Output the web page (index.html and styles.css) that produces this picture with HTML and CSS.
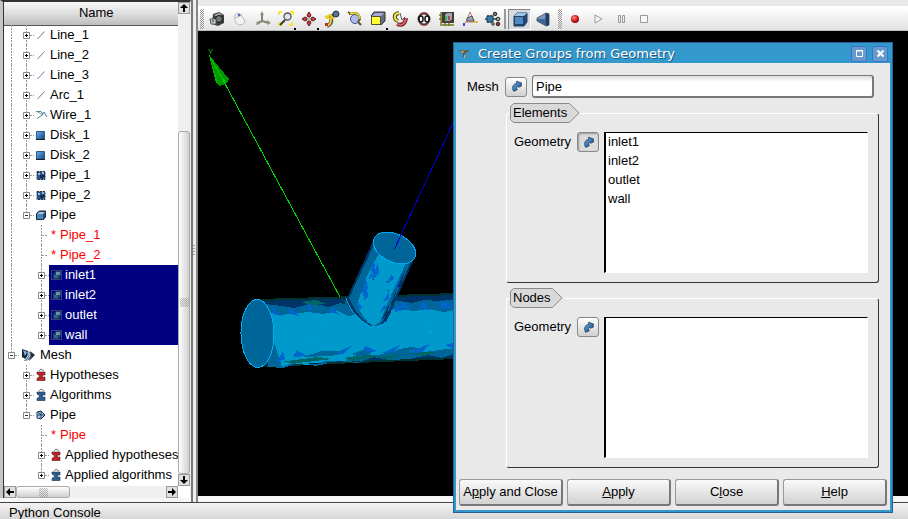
FILE: index.html
```html
<!DOCTYPE html>
<html lang="en">
<head>
<meta charset="utf-8">
<title>Create Groups from Geometry</title>
<link rel="stylesheet" href="styles.css">
</head>
<body>
<svg class="defs" aria-hidden="true">
  <defs>
    <linearGradient id="blue" x1="0" y1="0" x2="1" y2="1"><stop offset="0" stop-color="#69b4f0"/><stop offset="1" stop-color="#0d3f7c"/></linearGradient>
    <linearGradient id="grey" x1="0" y1="0" x2="1" y2="1"><stop offset="0" stop-color="#f4f4f4"/><stop offset="1" stop-color="#8c8c8c"/></linearGradient>
    <radialGradient id="red" cx=".4" cy=".35" r=".7"><stop offset="0" stop-color="#ff9a9a"/><stop offset=".5" stop-color="#dc2222"/><stop offset="1" stop-color="#7a0a0a"/></radialGradient>
  </defs>
  <symbol id="g-line" viewBox="0 0 15 20"><path d="M7.500 0V20" class="dots"/></symbol>
  <symbol id="g-tee" viewBox="0 0 15 20"><path d="M7.500 0V20M8 10.500H14" class="dots"/></symbol>
  <symbol id="g-plus" viewBox="0 0 15 20"><path d="M7.500 0V20M11 10.500H15" class="dots"/><path d="M4.500 7.500h6v6h-6z" class="box"/><path d="M6 10.500h3M7.500 9v3" stroke="#000"/></symbol>
  <symbol id="g-plus-end" viewBox="0 0 15 20"><path d="M7.500 0V8M11 10.500H15" class="dots"/><path d="M4.500 7.500h6v6h-6z" class="box"/><path d="M6 10.500h3M7.500 9v3" stroke="#000"/></symbol>
  <symbol id="g-minus-end" viewBox="0 0 15 20"><path d="M7.500 0V8M11 10.500H15" class="dots"/><path d="M4.500 7.500h6v6h-6z" class="box"/><path d="M6 10.500h3" stroke="#333"/></symbol>
  <symbol id="i-line" viewBox="0 0 16 16"><path d="M3.500 12L10.500 4.500" stroke="#777" fill="none"/></symbol>
  <symbol id="i-line-b" viewBox="0 0 16 16"><path d="M3.500 12L10.500 4.500" stroke="#7275a5" fill="none"/></symbol>
  <symbol id="i-wire" viewBox="0 0 16 16"><path d="M2 4.500h5l2 3-6 4M8 8l2-3 3 5" stroke="#4a8197" fill="none"/><path d="M3 4.500l5 3" stroke="#7aa" /></symbol>
  <symbol id="i-disk" viewBox="0 0 16 16"><path d="M2.500 4.500h8v8h-8z" fill="url(#blue)" stroke="#34597f"/><path d="M2 12.500h9" stroke="#222"/></symbol>
  <symbol id="i-part" viewBox="0 0 16 16"><path d="M3 4.500h8v8H3z" fill="#285688"/><path d="M3 4.500h8v8H3z" fill="none" stroke="#26323d" stroke-dasharray="2 1"/><path d="M4 6h2v2H4zM8 5h2v2H8z" fill="#91bada"/><path d="M6 8h3v3H6zM9 8h2v2H9z" fill="#132c4a"/></symbol>
  <symbol id="i-cube" viewBox="0 0 16 16"><path d="M2.500 6.500l3-2.500h6v6l-2 2.500h-7z" fill="#244a78" stroke="#17283c"/><path d="M3 7h6v5H3z" fill="#4b86bb"/><path d="M3 7l2.500-2H11L9 7z" fill="#9fc6df"/></symbol>
  <symbol id="i-ghost" viewBox="0 0 16 16"><path d="M2.500 3.500h10v9h-10z" fill="none" stroke="#6c7f7c" stroke-dasharray="1 1"/><path d="M4 7l3-3h5v5l-2 3H4z" fill="#1c3d63"/><path d="M7 5h4v3H7z" fill="#6594b1"/><path d="M5 8h4v3H5z" fill="#2f638f"/></symbol>
  <symbol id="i-meshroot" viewBox="0 0 21 16"><path d="M3 2l6 2 2 4-3 5-5-3z" fill="#182638"/><path d="M4 3l4 2-2 4z" fill="#8db4d6"/><path d="M8 4l7 3-5 6-5 1 3-5z" fill="#456b91"/><path d="M9 5l2 4-3 4M11 6l-5 7" stroke="#c9dceb" fill="none"/><path d="M11 4l5 4-6 6 2-5z" fill="#33332f"/></symbol>
  <symbol id="i-hyp" viewBox="0 0 16 16"><path d="M3 5h8v3H9L7 7l2 2-2 2 3-1h1v3.500H3v-2L6 9 3 7z" fill="#c62027" stroke="#50191b" stroke-width=".6"/><path d="M5 4l2-2 3 2" stroke="#777" fill="none"/></symbol>
  <symbol id="i-alg" viewBox="0 0 16 16"><path d="M3 5h8v3H9L7 7l2 2-2 2 3-1h1v3.500H3v-2L6 9 3 7z" fill="#2d6195" stroke="#1a293b" stroke-width=".6"/><path d="M5 4l2-2 3 2" stroke="#777" fill="none"/></symbol>
  <symbol id="i-mesh" viewBox="0 0 16 16"><path d="M3 5l4-1 4 4-4 4-4-1z" fill="#a8c4df" stroke="#1d3856"/><path d="M4 5l3 3h4M7 8v4M7 4v4M3 8h4" stroke="#244668" fill="none"/></symbol>
  <symbol id="i-arrow" viewBox="0 0 16 16"><path d="M4.500 14C1.500 9 4 4.500 8.500 4L8 1.500 14 3.500v4L10.500 9 10 7.500C8 8 7.500 10 9 12z" fill="url(#blue)" stroke="#18283e" stroke-width=".8"/></symbol>
</svg>

<main class="desk">
  <section class="browser" aria-label="Object browser">
    <div class="tree-col">
      <div class="tree-head">Name</div>
      <ul class="tree">
        <li><svg class="g"><use href="#g-line"/></svg><button class="g" aria-label="Expand"><svg class="g"><use href="#g-plus"/></svg></button><span class="item"><svg class="ic"><use href="#i-line"/></svg>Line_1</span></li>
        <li><svg class="g"><use href="#g-line"/></svg><button class="g" aria-label="Expand"><svg class="g"><use href="#g-plus"/></svg></button><span class="item"><svg class="ic"><use href="#i-line-b"/></svg>Line_2</span></li>
        <li><svg class="g"><use href="#g-line"/></svg><button class="g" aria-label="Expand"><svg class="g"><use href="#g-plus"/></svg></button><span class="item"><svg class="ic"><use href="#i-line-b"/></svg>Line_3</span></li>
        <li><svg class="g"><use href="#g-line"/></svg><button class="g" aria-label="Expand"><svg class="g"><use href="#g-plus"/></svg></button><span class="item"><svg class="ic"><use href="#i-line"/></svg>Arc_1</span></li>
        <li><svg class="g"><use href="#g-line"/></svg><button class="g" aria-label="Expand"><svg class="g"><use href="#g-plus"/></svg></button><span class="item"><svg class="ic"><use href="#i-wire"/></svg>Wire_1</span></li>
        <li><svg class="g"><use href="#g-line"/></svg><button class="g" aria-label="Expand"><svg class="g"><use href="#g-plus"/></svg></button><span class="item"><svg class="ic"><use href="#i-disk"/></svg>Disk_1</span></li>
        <li><svg class="g"><use href="#g-line"/></svg><button class="g" aria-label="Expand"><svg class="g"><use href="#g-plus"/></svg></button><span class="item"><svg class="ic"><use href="#i-disk"/></svg>Disk_2</span></li>
        <li><svg class="g"><use href="#g-line"/></svg><button class="g" aria-label="Expand"><svg class="g"><use href="#g-plus"/></svg></button><span class="item"><svg class="ic"><use href="#i-part"/></svg>Pipe_1</span></li>
        <li><svg class="g"><use href="#g-line"/></svg><button class="g" aria-label="Expand"><svg class="g"><use href="#g-plus"/></svg></button><span class="item"><svg class="ic"><use href="#i-part"/></svg>Pipe_2</span></li>
        <li><svg class="g"><use href="#g-line"/></svg><button class="g" aria-label="Collapse"><svg class="g"><use href="#g-minus-end"/></svg></button><span class="item"><svg class="ic"><use href="#i-cube"/></svg>Pipe</span></li>
        <li><svg class="g"><use href="#g-line"/></svg><span class="g"></span><svg class="g"><use href="#g-tee"/></svg><span class="item ref"><span class="star">*</span>Pipe_1</span></li>
        <li><svg class="g"><use href="#g-line"/></svg><span class="g"></span><svg class="g"><use href="#g-tee"/></svg><span class="item ref"><span class="star">*</span>Pipe_2</span></li>
        <li><svg class="g"><use href="#g-line"/></svg><span class="g"></span><button class="g" aria-label="Expand"><svg class="g"><use href="#g-plus"/></svg></button><span class="item sel"><svg class="ic"><use href="#i-ghost"/></svg>inlet1</span></li>
        <li><svg class="g"><use href="#g-line"/></svg><span class="g"></span><button class="g" aria-label="Expand"><svg class="g"><use href="#g-plus"/></svg></button><span class="item sel"><svg class="ic"><use href="#i-ghost"/></svg>inlet2</span></li>
        <li><svg class="g"><use href="#g-line"/></svg><span class="g"></span><button class="g" aria-label="Expand"><svg class="g"><use href="#g-plus"/></svg></button><span class="item sel"><svg class="ic"><use href="#i-ghost"/></svg>outlet</span></li>
        <li><svg class="g"><use href="#g-line"/></svg><span class="g"></span><button class="g" aria-label="Expand"><svg class="g"><use href="#g-plus-end"/></svg></button><span class="item sel"><svg class="ic"><use href="#i-ghost"/></svg>wall</span></li>
        <li><button class="g" aria-label="Collapse"><svg class="g"><use href="#g-minus-end"/></svg></button><span class="item"><svg class="ic wide"><use href="#i-meshroot"/></svg>Mesh</span></li>
        <li><span class="g"></span><button class="g" aria-label="Expand"><svg class="g"><use href="#g-plus"/></svg></button><span class="item"><svg class="ic"><use href="#i-hyp"/></svg>Hypotheses</span></li>
        <li><span class="g"></span><button class="g" aria-label="Expand"><svg class="g"><use href="#g-plus"/></svg></button><span class="item"><svg class="ic"><use href="#i-alg"/></svg>Algorithms</span></li>
        <li><span class="g"></span><button class="g" aria-label="Collapse"><svg class="g"><use href="#g-minus-end"/></svg></button><span class="item"><svg class="ic"><use href="#i-mesh"/></svg>Pipe</span></li>
        <li><span class="g"></span><span class="g"></span><svg class="g"><use href="#g-tee"/></svg><span class="item ref"><span class="star">*</span>Pipe</span></li>
        <li><span class="g"></span><span class="g"></span><button class="g" aria-label="Expand"><svg class="g"><use href="#g-plus"/></svg></button><span class="item"><svg class="ic"><use href="#i-hyp"/></svg>Applied hypotheses</span></li>
        <li><span class="g"></span><span class="g"></span><button class="g" aria-label="Expand"><svg class="g"><use href="#g-plus-end"/></svg></button><span class="item"><svg class="ic"><use href="#i-alg"/></svg>Applied algorithms</span></li>
      </ul>
      <div class="hbar">
        <button class="sb" aria-label="Scroll left"><svg width="8" height="8"><path d="M0 4l4-4v3h4v2H4v3z"/></svg></button>
        <span class="hthumb"><span class="dimple"></span></span>
        <button class="sb end" aria-label="Scroll right"><svg width="8" height="8"><path d="M8 4L4 0v3H0v2h4v3z"/></svg></button>
      </div>
    </div>
    <div class="vbar">
      <button class="sb" aria-label="Scroll up"><svg width="8" height="8"><path d="M4 0l4 4H5v4H3V4H0z"/></svg></button>
      <span class="vtrack"></span>
      <span class="vthumb"><span class="dimple"></span></span>
      <button class="sb" aria-label="Scroll down"><svg width="8" height="8"><path d="M4 8L0 4h3V0h2v4h3z"/></svg></button>
    </div>
  </section>
  <div class="splitter"><span></span></div>
  <section class="viewer">
    <div class="toolbar" role="toolbar">
      <span class="grip"></span>
      <button class="tool" aria-label="Dump view"><svg viewBox="0 0 18 18"><path d="M5 4l6-2 5 3v8l-6 3-6-2z" fill="#3f3f3f"/><path d="M6 5l5-2 3 2-5 2z" fill="#aaa"/><circle cx="11" cy="9" r="3.500" fill="#777" stroke="#111"/><path d="M2 9h6v5H3z" fill="#d8e0dd" stroke="#555"/><circle cx="5" cy="11" r="1.500" fill="#6a8f88"/></svg></button>
      <button class="tool" aria-label="Interaction style"><svg viewBox="0 0 18 18"><path d="M4 5c2-3 5-2 7 1l3 5c0 3-5 5-8 3-2-2-3-6-2-9z" fill="#f3f3f3" stroke="#bbb"/><path d="M4 8l7-3" stroke="#bbb"/><circle cx="8" cy="5" r="1.300" fill="#536bc5"/></svg></button>
      <button class="tool" aria-label="Show trihedron"><svg viewBox="0 0 18 18"><path d="M8 4v7l-4 2M8 11l7 2" stroke="#7d8574" stroke-width="2" fill="none"/><path d="M8 1l2 4H6zM2 15l1-4 3 3zM17 13l-4-3v5z" fill="#8c9675"/></svg></button>
      <button class="tool more" aria-label="Fit all"><svg viewBox="0 0 18 18"><path d="M2 5V2h3M13 2h3v3M2 12v3h3M12 15h3v-3" stroke="#f5e500" stroke-width="1.500" fill="none"/><path d="M8 10l-5 5" stroke="#333" stroke-width="2"/><circle cx="10.500" cy="6.500" r="3.500" fill="#dce7e8" stroke="#555" stroke-width="1.300"/></svg></button>
      <button class="tool more" aria-label="Pan"><svg viewBox="0 0 18 18"><path d="M9 2l2 3-1 2H8L7 5zM9 16l2-3-1-2H8l-1 2zM2 9l3-2 2 1v2l-2 1zM16 9l-3-2-2 1v2l2 1z" fill="#c8403b" stroke="#5d2020"/><path d="M8 8h2v2H8z" fill="#ccc"/></svg></button>
      <button class="tool" aria-label="Rotate"><svg viewBox="0 0 18 18"><path d="M4 16c3-1 5-4 4-9l3-2" stroke="#555" stroke-width="4" fill="none"/><path d="M4 16c3-1 4-3 4-7-1-2-4 0-5-2l4-2 4 4" stroke="#e8cf21" stroke-width="2" fill="none"/><circle cx="13" cy="4" r="3" fill="#527693" stroke="#253746"/><path d="M2 13h3v3H2z" fill="#b43434"/></svg></button>
      <button class="tool" aria-label="Rotation point"><svg viewBox="0 0 18 18"><circle cx="9" cy="9" r="4.500" fill="#aebcf0" stroke="#41528f"/><path d="M3 4h2c4-2 8-1 9 5l-2 3M2 2l3 2M12 12l3 3" stroke="#5d552b" stroke-width="2" fill="none"/><path d="M4 4c5-2 9-1 10 5" stroke="#f0d81b" stroke-width="1.500" fill="none"/></svg></button>
      <button class="tool more" aria-label="Front view"><svg viewBox="0 0 18 18"><path d="M2 6l3-4h11v9l-4 4z" fill="#686895" stroke="#333"/><path d="M3 6l3-3h9l-3 3z" fill="#a7a7d3"/><path d="M2.500 6.500h9v8h-9z" fill="#ffff35" stroke="#55552a"/></svg></button>
      <button class="tool" aria-label="Rotate clockwise"><svg viewBox="0 0 18 18"><path d="M7 3C1 4 2 9 6 11" stroke="#514a20" stroke-width="4" fill="none"/><path d="M7 3C1 4 2 9 6 11" stroke="#f3df48" stroke-width="2" fill="none"/><path d="M5 14c5 2 8 0 9-6" stroke="#581d22" stroke-width="4" fill="none"/><path d="M5 14c5 2 8 0 9-6" stroke="#e45b61" stroke-width="2" fill="none"/><path d="M8 3l2 7 3-3" stroke="#555" fill="none"/></svg></button>
      <button class="tool" aria-label="Reset"><svg viewBox="0 0 18 18"><circle cx="9" cy="9" r="5.500" fill="#ececec" stroke="#55393a" stroke-width="2"/><ellipse cx="6" cy="9" rx="2" ry="3" fill="#fff" stroke="#111" stroke-width="1.500"/><ellipse cx="12" cy="9" rx="2" ry="3" fill="#fff" stroke="#111" stroke-width="1.500"/><path d="M5 4c3-2 6-2 8 0M5 14c3 2 6 2 8 0" stroke="#b44242" fill="none"/></svg></button>
      <button class="tool" aria-label="Scaling"><svg viewBox="0 0 18 18"><path d="M4 2h12v11H4z" fill="#433c34"/><path d="M7 5l2-2h5v6l-2 2H7z" fill="#9ab"/><path d="M7 6h2v4H7z" fill="#35b64d"/><path d="M10 6h2v4h-2z" fill="#b84545"/><path d="M3 2v13h13M1 5h3M1 9h3M7 13v3M11 13v3" stroke="#797927" stroke-width="1.500" fill="none"/></svg></button>
      <button class="tool" aria-label="Graduated axes"><svg viewBox="0 0 18 18"><path d="M9 2L5 12l-3 3M5 12h12M9 2l4 9" stroke="#b5796d" fill="none"/><path d="M6 8l5-2 2 5H6z" fill="#9da2ac" stroke="#555"/><path d="M2 13h2v3H2z" fill="#3c45d6"/><path d="M13 11h3v2h-3z" fill="#e3c81e"/></svg></button>
      <button class="tool" aria-label="Ambient"><svg viewBox="0 0 18 18"><path d="M1 9h12M4 5v8M7 5v8" stroke="#233b4b" stroke-width="1.500"/><path d="M3 6h6v6H3z" fill="#347eae" stroke="#20394d"/><circle cx="11" cy="4" r="1.800" fill="#777" stroke="#222"/><circle cx="14" cy="9" r="1.800" fill="#aaa" stroke="#222"/><circle cx="14" cy="14" r="1.800" fill="#a63131" stroke="#222"/><circle cx="9" cy="14" r="1.300" fill="#ddd" stroke="#333"/></svg></button>
      <span class="sep"></span>
      <button class="tool down" aria-label="Parallel mode" aria-pressed="true"><svg viewBox="0 0 18 18"><path d="M3 6l3-3h10v9l-3 4H3z" fill="#1f4b7c" stroke="#263c54"/><path d="M3 6l3-3h10l-3 3z" fill="#9cc3df"/><path d="M3.500 6.500h9v8h-9z" fill="#5089c2" stroke="#243f60"/></svg></button>
      <button class="tool" aria-label="Perspective mode"><svg viewBox="0 0 18 18"><path d="M3 8l9-5 3 1v11l-3 1-9-5z" fill="#3f6693" stroke="#5b6b7a"/><path d="M12 3l3 1v11l-3 1z" fill="#213d61"/><path d="M4 8l7-4v5H4z" fill="#759abd"/></svg></button>
      <span class="grip"></span>
      <button class="tool" aria-label="Record"><svg viewBox="0 0 18 18"><circle cx="9" cy="9" r="4" fill="url(#red)"/></svg></button>
      <button class="tool" aria-label="Play"><svg viewBox="0 0 18 18"><path d="M6 5l7 4-7 4z" fill="#f7f7f7" stroke="#999"/></svg></button>
      <button class="tool" aria-label="Pause"><svg viewBox="0 0 18 18"><path d="M6.500 5.500h2v7h-2zM10.500 5.500h2v7h-2z" fill="#eee" stroke="#999"/></svg></button>
      <button class="tool" aria-label="Stop"><svg viewBox="0 0 18 18"><path d="M5.500 5.500h7v7h-7z" fill="#f7f7f7" stroke="#999"/></svg></button>
    </div>
    <svg class="scene" shape-rendering="crispEdges" role="img" aria-label="Pipe geometry">
      <g transform="translate(-198 -31)">
        <text x="208" y="54" class="axis">Y</text>
        <path d="M209 55L229 79Q227 85 219 86L216 83z" fill="#009600"/>
        <path d="M209 55L216 83l3 1z" fill="#00b400"/><path d="M209 55l13 23 3 4" stroke="#00d400" fill="none"/>
        <path d="M223 80L340 297" stroke="#00e000" fill="none"/>
        <path d="M258 299L456 293V359L258 367z" fill="#003333"/>
        <path d="M258 301L456 295V357L258 365z" fill="#003366"/>
        <path d="M264 304l18 2 12 2 20-5 14 4 12-4 14 3 40-6 18 3 12-3 16 1 16-2v54l-14 5-15-3-17 4-20 1-17-3-15 6-20-2-22 5-18-3-14 5-16-1z" fill="#006699"/>
        <path d="M264 310l14 5 14-1 16-2 16 2 14-3 10 5 50-7 16 2 14-2 16 3 16-3v39l-14 1-14 2-18 2-16-3-20 5-14 1-20 5-18 0-20 4-14-2-10 4z" fill="#0099cc"/>
        <path d="M272 306l9 10-8-2zM291 308l8 8-11-3zM307 304l6 4-4 3zM331 307l9 8-10-3zM396 304l7 6-8 2zM403 301l8 9-11-3zM424 302l6 9-12-4zM441 300l13 7-13 2z" fill="#0066cc"/>
        <path d="M283 351l2 8-9 4zM297 350l10 6-14 1zM351 346l-8 8-15 2zM365 346l12 5-15 4zM400 345l-6 7-12 1zM429 344l-7 9-14 0zM445 345l10-3v8z" fill="#0066cc"/>
        <path d="M280 362l38-5 14 2-34 4zM344 358l24-4 8 3-26 4zM376 357l24-2-12 5zM405 353l30-1-9 4zM300 302l16-2 10 4-14 1zM344 301l8 1-6 3z" fill="#006666"/>
        <path d="M302 357l20-6 22 0-12 5zM395 350l15-3 10 1-14 5zM352 354l10-4 10 3-12 4z" fill="#006699"/>
        <path d="M291 365h10M309 363h10M326 362h12M352 361h8M372 360h10M402 359h12M427 358h12" stroke="#003333"/>
        <path d="M430 324h2M428 331h4M320 327h2M311 336h2" stroke="#00a9df"/>
        <ellipse cx="257.500" cy="333.500" rx="16.500" ry="34" fill="#006699" stroke="#00aeef" transform="rotate(-1 257.500 333.500)"/>
        <path d="M373 241L347 298Q352 318 370 326Q383 330 389 316L415 257z" fill="#003366"/>
        <path d="M374 245L349 298Q358 319 373 326L380 326 391 307 411 261z" fill="#006699"/>
        <path d="M378 255L366 278 357 304Q363 320 373 326L380 322 388 302 406 263z" fill="#0099cc"/>
        <path d="M374 257l1 14 3-9 1 11-6 7-2-10zM366 278l2 11-7 4zM363 292l4-6 1 11-4 3zM358 301l4 7-4 2zM389 291l-6 11 6-3zM391 275l-4 9 8-6zM400 277l-7 13 5-2zM384 305l-4 8 6-6zM372 269l-3 10 4-3z" fill="#0066cc"/>
        <path d="M405 270l-8 17 3 1zM397 288l-7 18 3-2zM389 305l-7 14 5-3z" fill="#003366"/>
        <path d="M386 281h2M387 290h2M372 279h2" stroke="#004f90"/>
        <path d="M346 298Q352 317 370 326Q378 329 386 322" stroke="#009ce0" fill="none"/>
        <ellipse cx="394.500" cy="248" rx="22.500" ry="14" fill="#006699" stroke="#00a9ed" transform="rotate(25 394.500 248)"/>
        <path d="M394.500 249L454 121" stroke="#0000d0" fill="none"/>
      </g>
    </svg>
  </section>
</main>
<footer class="console">Python Console</footer>

<form class="dialog" role="dialog" aria-labelledby="dlg-title">
  <header class="title">
    <svg width="12" height="12" viewBox="0 0 12 12" aria-hidden="true"><path d="M0 3l4-1 2 1 2-1 4 1-5 2v4H5V5z" fill="#6b5633"/><path d="M2 3l3 0 1 2z" fill="#e6cc7d"/><path d="M6 7h1v3H6z" fill="#ddb33c"/></svg>
    <h1 id="dlg-title">Create Groups from Geometry</h1>
    <button type="button" class="win" aria-label="Maximize"><svg width="9" height="9"><path d="M1.500 2h6v5.500h-6z" fill="none" stroke="#fff"/><path d="M1 1.500h7" stroke="#fff"/></svg></button>
    <button type="button" class="win" aria-label="Close window"><svg width="9" height="9"><path d="M1.500 1.500l6 6M7.500 1.500l-6 6" stroke="#fff" stroke-width="2"/></svg></button>
  </header>
  <div class="content">
    <div class="mesh">
      <label for="mesh-name">Mesh</label>
      <button type="button" class="pick" aria-label="Select mesh"><svg><use href="#i-arrow"/></svg></button>
      <input id="mesh-name" type="text" value="Pipe">
    </div>
    <fieldset class="group">
      <legend><svg class="tag" width="70" height="20" aria-hidden="true"><path d="M3.500.5H59.500L69 10L59.500 19.500H3.500L.5 16.500V3.500z"/></svg><span>Elements</span></legend>
      <label for="el-geom">Geometry</label>
      <button type="button" class="pick on" aria-label="Select element geometry" aria-pressed="true"><svg><use href="#i-arrow"/></svg></button>
      <select id="el-geom" multiple>
        <option>inlet1</option>
        <option>inlet2</option>
        <option>outlet</option>
        <option>wall</option>
      </select>
    </fieldset>
    <fieldset class="group">
      <legend><svg class="tag" width="54" height="20" aria-hidden="true"><path d="M3.500.5H42.500L52 10L42.500 19.500H3.500L.5 16.500V3.500z"/></svg><span>Nodes</span></legend>
      <label for="nd-geom">Geometry</label>
      <button type="button" class="pick" aria-label="Select node geometry"><svg><use href="#i-arrow"/></svg></button>
      <select id="nd-geom" multiple></select>
    </fieldset>
  </div>
  <div class="actions">
    <button type="button">A<u>p</u>ply and Close</button>
    <button type="button"><u>A</u>pply</button>
    <button type="button">C<u>l</u>ose</button>
    <button type="button"><u>H</u>elp</button>
  </div>
</form>
</body>
</html>
```
FILE: styles.css
```css
* { box-sizing: border-box; }
body {
  margin: 0;
  height: 100vh;
  display: flex;
  flex-direction: column;
  position: relative;
  overflow: hidden;
  background: #e9e9e9;
  color: #000;
  font: 13px/20px "Liberation Sans", Arial, sans-serif;
}
button, input, select { font: inherit; color: inherit; margin: 0; }
button { padding: 0; border: 0; background: none; display: flex; align-items: center; justify-content: center; }
.defs { position: absolute; width: 0; height: 0; }
.dots { fill: none; stroke: #999; stroke-dasharray: 2 1; }
.box { fill: #fff; stroke: #888; }

.desk { flex: 1; min-height: 0; display: flex; background: #f6f6f6; }

/* object browser */
.browser {
  flex: 0 0 191px;
  display: flex;
  min-height: 0;
  margin-bottom: 4px;
  border-left: 3px solid #c9c5c0;
  border-top: 2px solid #333;
  border-right: 1px solid #eee;
  background: #fff;
}
.tree-col { flex: 1; min-width: 0; display: flex; flex-direction: column; border-left: 1px solid #333; }
.tree-head {
  height: 24px;
  flex: none;
  line-height: 22px;
  padding-left: 10px;
  text-align: center;
  border-bottom: 1px solid #555;
  background: linear-gradient(#f8f8f8, #dedede 50%, #bdbdbd);
}
.tree { flex: 1; min-height: 0; margin: -1px 0 0; padding: 0; list-style: none; overflow: hidden; }
.tree li { display: flex; height: 20px; white-space: nowrap; }
.g { flex: none; width: 15px; height: 20px; display: block; }
.item { flex: 1; min-width: 0; display: flex; align-items: center; overflow: hidden; }
.ic { flex: none; width: 16px; height: 16px; }
.ic.wide { width: 21px; }
.ref { color: #f00; }
.star { width: 11px; padding-left: 2px; }
.sel { background: #000080; color: #fff; }

.vbar, .hbar { display: flex; background: #f0f0f0; }
.vbar { flex: 0 0 12px; flex-direction: column; margin-bottom: 12px; }
.hbar { flex: none; height: 12px; }
.sb { flex: none; width: 12px; height: 12px; border: 1px solid #999; background: #e0e0e0; }
.sb.end { margin-left: auto; }
.vtrack { flex: 118; background: #efefef; }
.vthumb { flex: 342; }
.vthumb, .hthumb {
  display: flex;
  align-items: center;
  justify-content: center;
  border: 1px solid #aaa;
  border-radius: 3px;
}
.vthumb { background: linear-gradient(90deg, #fff, #cfcfcf); }
.hthumb { flex: 0 0 54px; background: linear-gradient(#fff, #cfcfcf); }
.dimple { width: 9px; height: 9px; background: repeating-conic-gradient(#888 0 25%, transparent 0 50%) 0 0 / 2px 2px; opacity: .6; }

.splitter {
  flex: 0 0 7px;
  display: flex;
  align-items: center;
  border-left: 2px solid #777;
  border-right: 2px solid #888;
  background: #eee;
}
.splitter span { width: 2px; height: 12px; background: repeating-linear-gradient(#999 0 1px, #eee 1px 3px); }

/* viewer */
.viewer { flex: 1; min-width: 0; display: flex; flex-direction: column; padding-top: 6px; background: #e9e9e9; margin-bottom: 6px; }
.toolbar {
  flex: none;
  height: 25px;
  display: flex;
  align-items: center;
  padding: 0 0 0 2px;
  border-top: 2px solid #fff;
  border-bottom: 1px solid #bbb;
  background: linear-gradient(#fff, #f2f2f2 40%, #e2e2e2);
}
.grip { width: 4px; height: 20px; margin-right: 1px; background: repeating-conic-gradient(#999 0 25%, transparent 0 50%) 0 0 / 2px 2px; }
.tool { position: relative; width: 23px; height: 21px; flex: none; }
.tool svg { width: 18px; height: 18px; }
.more::after { content: ""; position: absolute; right: 1px; bottom: 0; width: 2px; height: 2px; background: #000; }
.sep { width: 2px; height: 20px; margin-right: 2px; background: #999; }
.down { border: 1px solid #888; border-right-color: #fff; border-bottom-color: #fff; background: #d5dbe3; }
.tool + .grip { margin-left: 4px; }
.scene { flex: 1; min-height: 0; width: 100%; display: block; background: #000; }
.axis { font: 8px "Liberation Sans", Arial, sans-serif; fill: #00b400; }

.console {
  flex: none;
  height: 17px;
  padding-left: 9px;
  border-top: 1px solid #444;
  line-height: 20px;
  background: linear-gradient(#f4f4f4, #d6d6d6);
}

/* dialog */
.dialog {
  position: absolute;
  left: 453px;
  right: 15px;
  top: 42px;
  display: flex;
  flex-direction: column;
  border: 3px solid #3399cc;
  border-top: 0;
  outline: 1px solid #2a5f98;
  outline-offset: -1px;
  background: #e9e9e9;
}
.title { display: flex; align-items: center; height: 21px; padding: 1px 3px 0 3px; background: #3399cc; border-top: 1px solid #4f8ff0; margin: 0 -1px; }
.title h1 {
  flex: 1;
  margin: 0 0 0 8px;
  font: 13px/20px "DejaVu Sans", sans-serif;
  color: #fff;
  text-shadow: 1px 1px 0 #26567f;
}
.win { width: 16px; height: 16px; margin-left: 5px; border: 1px solid #3a72d0; background: #6699cc; border-radius: 2px; }
.content { padding: 12px 16px 0 11px; }
.mesh { display: flex; align-items: center; }
.mesh label { width: 38px; }
.mesh input {
  flex: 1;
  min-width: 0;
  height: 23px;
  margin-left: 5px;
  padding: 0 3px;
  border: 1px solid #777;
  border-width: 1px 2px 2px 1px;
  border-radius: 3px;
  background: linear-gradient(#ddd, #fff 6px);
}
.pick {
  width: 22px;
  height: 20px;
  flex: none;
  border: 1px solid #888;
  border-radius: 3px;
  background: linear-gradient(#fff, #d0d0d0);
}
.pick svg { width: 13px; height: 13px; }
.pick.on { background: #dcdcdc; box-shadow: inset 1px 1px 2px #999; }
.group {
  display: flex;
  align-items: flex-start;
  margin: 5px -5px 0 39px;
  padding: 9px 10px 9px 7px;
  min-width: 0;
  border: 1px solid #333;
  border-left-color: #fff;
  border-top-color: #fff;
  border-radius: 3px;
}
.group legend { height: 20px; margin-left: -4px; padding: 0; display: grid; }
.group legend > * { grid-area: 1 / 1; }
.group legend span { padding-left: 3px; line-height: 19px; }
.tag path { fill: #d9d9d9; stroke: #8a8a8a; }
.group label { width: 63px; }
.group select {
  flex: 1;
  min-width: 0;
  height: 141px;
  margin-left: 5px;
  padding: 1px 0 0;
  overflow: hidden;
  border: 1px solid #000;
  border-left-width: 2px;
  border-right-color: #fff;
  border-bottom-color: #fff;
  border-radius: 0;
  background: #fff;
}
.group option { height: 19px; min-height: 19px; padding: 0 2px; line-height: 19px; }
.actions { display: grid; grid-template-columns: repeat(4, 1fr); gap: 4px; padding: 11px 3px 4px; }
.actions button {
  display: block;
  height: 27px;
  white-space: nowrap;
  border: 1px solid #999;
  border-right: 2px solid #777;
  border-bottom: 2px solid #777;
  border-radius: 3px;
  background: linear-gradient(#fafafa, #d2d2d2);
}
```
